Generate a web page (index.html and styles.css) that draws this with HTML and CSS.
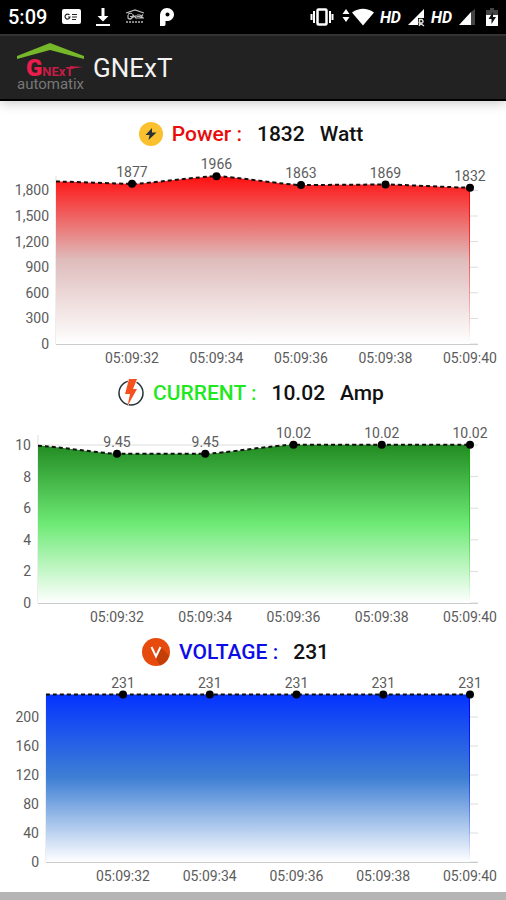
FILE: index.html
```html
<!DOCTYPE html>
<html lang="en">
<head>
  <meta charset="utf-8">
  <meta name="viewport" content="width=device-width, initial-scale=1">
  <title>GNExT</title>
  <link rel="stylesheet" href="styles.css">
</head>
<body>
  <div class="status-bar">
    <div class="status-left">
      <span class="clock">5:09</span>
      <svg width="20" height="20" viewBox="0 0 20 20">
        <rect x="1" y="2" width="19" height="15" rx="2" fill="#fff"/>
        <path d="M8.500 8a2.500 2.500 0 1 0 .5 2H7M11 7.500h5M11 10h5M11 12.500h4" fill="none" stroke="#222" stroke-width="1.200"/>
      </svg>
      <svg width="16" height="20" viewBox="0 0 16 20">
        <path d="M6.500 1h3v8h4L8 14.500 2.500 9h4zM1 17h14v2H1z" fill="#fff"/>
      </svg>
      <svg width="20" height="20" viewBox="0 0 20 20">
        <path d="M1 6 10 3l9 3M3 7.500a3.500 3 0 0 1 4-1M3 8v3q2 2 4 0V9.500H5M8 11V8l3 3V8M12 8h3M12 9.500h3M12 11h7M15 8l3 3M18 7.500l-3 3.500" fill="none" stroke="#bbb" stroke-width="1.200"/>
        <path d="M1 15h18" stroke="#888" stroke-width="2" stroke-dasharray="2 1"/>
      </svg>
      <svg width="16" height="20" viewBox="0 0 16 20">
        <path d="M1 9C1 4 4 1 8 1c4 0 7 3 7 6.500S12 14 9 14H6.500v3.500q0 1.500-2 1.500H1z" fill="#fff"/>
        <circle cx="8.500" cy="7.500" r="2" fill="#000"/>
      </svg>
    </div>
    <div class="status-right">
      <svg width="24" height="20" viewBox="0 0 24 20">
        <rect x="7.500" y="2.500" width="9" height="15" rx="1" fill="none" stroke="#fff" stroke-width="2.500"/>
        <path d="M4 4v12M20 4v12M1.500 7v6M22.500 7v6" stroke="#fff" stroke-width="2"/>
      </svg>
      <svg class="wifi" width="32" height="20" viewBox="0 0 32 20">
        <path d="M4 2l3.500 5h-7zM4 15l3.500-5h-7z" fill="#fff"/>
        <path d="M10 5.500Q21 -2 32 5.500L21 18.500z" fill="#fff"/>
      </svg>
      <span class="hd">HD</span>
      <svg width="18" height="20" viewBox="0 0 18 20">
        <path d="M17 2v9h-6v7H1z" fill="#fff"/>
        <path d="M12.500 19v-6.500h2.500q2 2 0 3.500h-2l4 3" fill="none" stroke="#ddd" stroke-width="1.500"/>
      </svg>
      <span class="hd">HD</span>
      <svg width="18" height="20" viewBox="0 0 18 20">
        <path d="M17 2v16h-4V5z" fill="#444"/>
        <path d="M13 5v13H1z" fill="#fff"/>
      </svg>
      <svg class="battery" width="12" height="20" viewBox="0 0 12 20">
        <path d="M4 1h4v2h4v7H0V3h4z" fill="#444"/>
        <path d="M0 8h12v11H0z" fill="#fff"/>
        <path d="M7 5 2.500 12H5.500v5L10 10H7z" fill="#111"/>
      </svg>
    </div>
  </div>

  <header>
    <svg class="logo" width="70" height="50" viewBox="0 0 70 50">
      <path d="M1 13 34 0l34 13v3L34 7 1 16z" fill="#76b82a"/>
      <text x="10" y="33" class="logo-name">G<tspan class="logo-next">NExT</tspan></text>
      <path d="M54 23 67 24l-13 2z" fill="#c51d45"/>
      <text x="1" y="46" class="logo-sub">automatix</text>
    </svg>
    <h1>GNExT</h1>
  </header>

  <main>
    <section class="reading">
      <h2>
        <svg class="reading-icon" width="24" height="24" viewBox="0 0 24 24">
          <circle cx="12" cy="12" r="12" fill="#fbc02d"/>
          <path d="M13 6 6.500 13h4L9.500 18 17.500 10.500h-4.500z" fill="#263238"/>
        </svg>
        <span class="label power">Power :</span>
        <span>1832</span>
        <span>Watt</span>
      </h2>
      <svg class="chart" id="power-chart" viewBox="0 0 506 220"></svg>
    </section>

    <section class="reading">
      <h2>
        <svg class="reading-icon" width="26" height="28" viewBox="0 0 26 28">
          <circle cx="13" cy="14" r="12" fill="none" stroke="#263238" stroke-width="1.500"/>
          <path d="M10.500 0H20l-4 9h4L9.500 28l2-12H6z" fill="#fff"/>
          <path d="M11 0h8l-4 10h4L9.500 27l2.500-12H7z" fill="#f4511e"/>
        </svg>
        <span class="label current">CURRENT :</span>
        <span>10.02</span>
        <span>Amp</span>
      </h2>
      <svg class="chart" id="current-chart" viewBox="0 0 506 220"></svg>
    </section>

    <section class="reading">
      <h2>
        <svg class="reading-icon" width="28" height="28" viewBox="0 0 28 28">
          <circle cx="14" cy="14" r="14" fill="#e64a0c"/>
          <path d="M18.500 9 27 17.500A14 14 0 0 1 18 27.500L13 19z" fill="#c43e08"/>
          <path d="M9.500 9 14 18.500 18.500 9" fill="none" stroke="#fff" stroke-width="2"/>
        </svg>
        <span class="label voltage">VOLTAGE :</span>
        <span>231</span>
        <span class="no-unit"></span>
      </h2>
      <svg class="chart" id="voltage-chart" viewBox="0 0 506 220"></svg>
    </section>
  </main>

  <footer></footer>

  <script>
    const BASE = 193;
    const RIGHT = 470;
    const times = ["05:09:32", "05:09:34", "05:09:36", "05:09:38", "05:09:40"];

    // first value sits on the left axis and has no label
    const charts = [
      {
        id: "power-chart", left: 56, firstX: 132, step: 300, stepHeight: 25.6, ticks: 6,
        values: [1904, 1877, 1966, 1863, 1869, 1832],
        colors: ["#ff1010", "#dfbcbc", "#ffffff"], edge: "#ff0000"
      },
      {
        id: "current-chart", left: 38, firstX: 117, step: 2, stepHeight: 31.6, ticks: 5,
        values: [9.95, 9.45, 9.45, 10.02, 10.02, 10.02],
        colors: ["#228b22", "#6eea76", "#ffffff"], edge: "#00b800"
      },
      {
        id: "voltage-chart", left: 46, firstX: 123, step: 40, stepHeight: 29, ticks: 5,
        values: [231, 231, 231, 231, 231, 231],
        colors: ["#0433ff", "#3f80d4", "#ffffff"], edge: "#0000ff"
      }
    ];

    function drawChart(chart) {
      const gap = (RIGHT - chart.firstX) / (times.length - 1);
      const points = chart.values.map(function(value, i) {
        return {
          x: i === 0 ? chart.left : chart.firstX + gap * (i - 1),
          y: BASE - value / chart.step * chart.stepHeight,
          value: value
        };
      });

      let line = `M${points[0].x} ${points[0].y}`;
      for (let i = 1; i < points.length; i++) {
        const a = points[i - 1];
        const b = points[i];
        const bend = (b.x - a.x) / 6;
        line += `C${a.x + bend} ${a.y} ${b.x - bend} ${b.y} ${b.x} ${b.y}`;
      }

      let html = `
        <defs>
          <linearGradient id="${chart.id}-fill" x1="0" y1="0" x2="0" y2="1">
            <stop offset="0" stop-color="${chart.colors[0]}"/>
            <stop offset="0.5" stop-color="${chart.colors[1]}"/>
            <stop offset="1" stop-color="${chart.colors[2]}"/>
          </linearGradient>
          <linearGradient id="${chart.id}-edge" gradientUnits="userSpaceOnUse" x1="0" y1="30" x2="0" y2="${BASE}">
            <stop offset="0" stop-color="${chart.edge}"/>
            <stop offset="1" stop-color="${chart.edge}" stop-opacity="0"/>
          </linearGradient>
        </defs>`;

      for (let i = 0; i <= chart.ticks; i++) {
        const y = BASE - i * chart.stepHeight;
        html += `<path class="grid" d="M${chart.left} ${y}H478"/>`;
        html += `<text class="tick" x="${chart.left - 7}" y="${y + 5}">${(i * chart.step).toLocaleString("en-US")}</text>`;
      }

      html += `<path class="grid" d="M${chart.left} 25V${BASE}"/>`;
      html += `<path d="${line}V${BASE}H${chart.left}Z" fill="url(#${chart.id}-fill)"/>`;
      html += `<rect x="${RIGHT - 1}" y="${points[5].y}" width="1" height="${BASE - points[5].y}" fill="url(#${chart.id}-edge)"/>`;
      html += `<path class="axis" d="M${chart.left} ${BASE + 0.5}H478"/>`;
      html += `<path class="line" d="${line}"/>`;

      points.slice(1).forEach(function(point, i) {
        html += `<circle cx="${point.x}" cy="${point.y}" r="4"/>`;
        html += `<text class="value" x="${point.x}" y="${point.y - 7}">${point.value}</text>`;
        html += `<text class="value" x="${point.x}" y="212">${times[i]}</text>`;
      });

      document.getElementById(chart.id).innerHTML = html;
    }

    charts.forEach(drawChart);
  </script>
</body>
</html>
```
FILE: styles.css
```css
* {
  box-sizing: border-box;
}

body, h1, h2 {
  margin: 0;
  padding: 0;
}

body {
  font-family: Roboto, "Liberation Sans", sans-serif;
  background-color: #fff;
  min-height: 100vh;
  display: flex;
  flex-direction: column;
}

svg {
  flex-shrink: 0;
}

.status-bar {
  background-color: #000;
  color: #fff;
  height: 34px;
  padding: 0 8px;
  display: flex;
  justify-content: space-between;
  align-items: center;
}

.status-left,
.status-right {
  display: flex;
  align-items: center;
}

.status-left {
  gap: 14px;
}

.status-right {
  gap: 6px;
}

.clock {
  font-size: 20px;
  font-weight: 500;
}

.wifi {
  margin-left: 2px;
}

.hd {
  font-size: 16px;
  font-weight: 700;
  font-style: italic;
}

.battery {
  margin-left: 4px;
}

header {
  background-color: #222;
  border-top: 2px solid #333;
  border-bottom: 2px solid #000;
  box-shadow: 0 1px 12px rgba(0, 0, 0, 0.25);
  color: #f3f3f3;
  height: 67px;
  padding: 0 16px;
  display: flex;
  align-items: center;
  gap: 7px;
}

header h1 {
  font-size: 26px;
  font-weight: 400;
}

.logo-name {
  font-size: 24px;
  font-weight: 900;
  fill: #ea1d4d;
}

.logo-next {
  font-size: 13px;
  font-weight: 700;
  fill: #c51d45;
}

.logo-sub {
  font-size: 15px;
  fill: #777;
}

main {
  padding-top: 16px;
  flex: 1;
}

.reading {
  margin-bottom: 5px;
}

.reading:last-child {
  margin-bottom: 0;
}

.reading h2 {
  height: 34px;
  padding-right: 4px;
  display: flex;
  justify-content: center;
  align-items: center;
  gap: 15px;
  font-size: 21px;
  font-weight: 500;
  color: #111;
}

.reading-icon {
  margin-right: -6px;
}

.power {
  color: #e80c0c;
}

.current {
  color: #1fe81f;
}

.voltage {
  color: #0c0ce8;
}

.no-unit {
  width: 16px;
}

.chart {
  display: block;
  width: 100%;
}

.chart text {
  font-size: 14px;
  fill: #5c5c5c;
}

.chart .tick {
  text-anchor: end;
}

.chart .value {
  text-anchor: middle;
}

.grid {
  stroke: #ddd;
  stroke-width: 1;
  fill: none;
}

.axis {
  stroke: #ccc;
  stroke-width: 1;
}

.line {
  fill: none;
  stroke: #111;
  stroke-width: 2;
  stroke-dasharray: 4 3;
}

footer {
  background-color: #b5b5b5;
  height: 8px;
}
```
